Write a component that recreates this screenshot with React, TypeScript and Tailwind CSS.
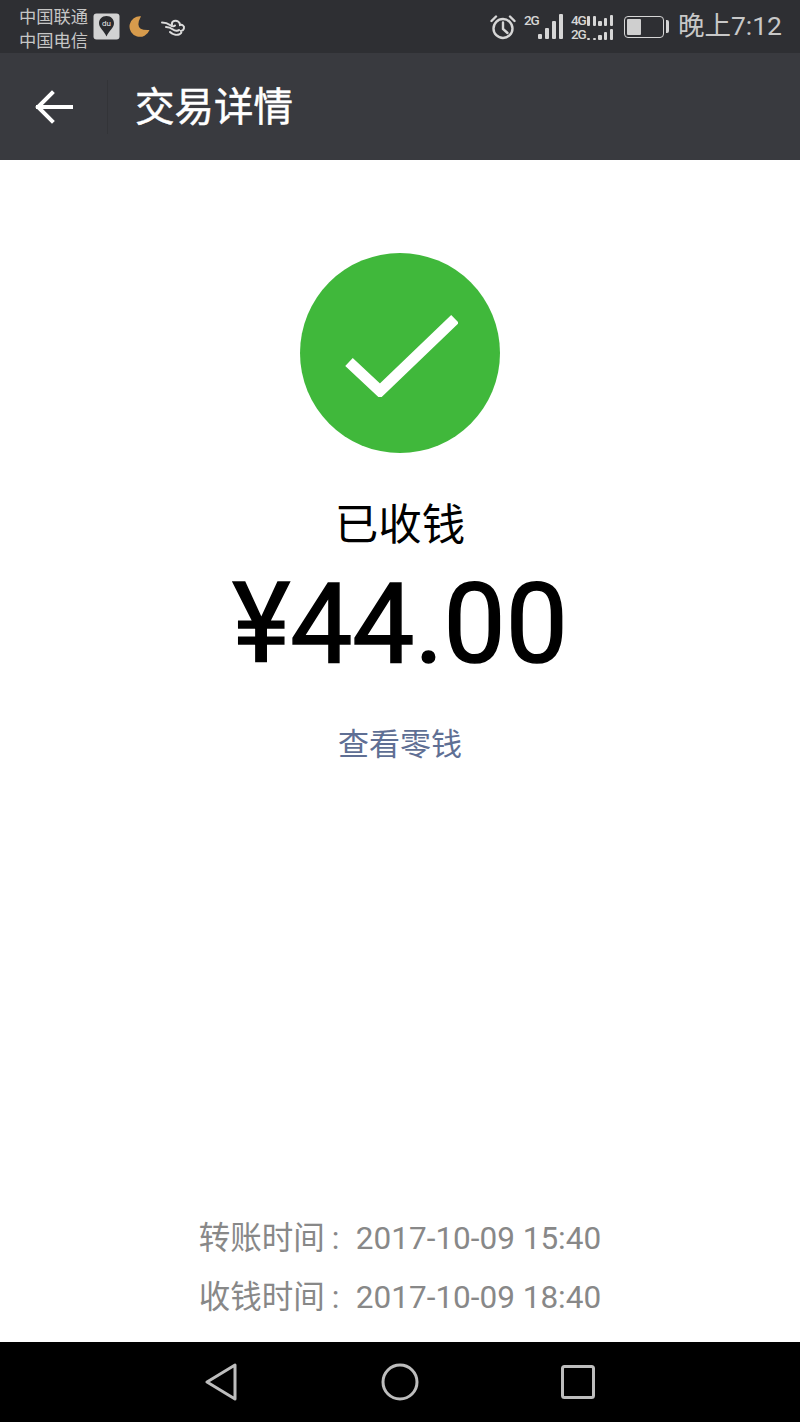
import React from 'react';

const font = "font-['Roboto','Noto_Sans_CJK_SC',sans-serif]";

const BaiduIcon = () => (
  <svg width="27" height="27" viewBox="0 0 27 27">
    <rect x="0.5" y="0.5" width="26" height="26" rx="3" fill="#d2d2d2" />
    <path d="M13.5 3C8.8 3 6 6.4 6 10.2c0 4.6 5.2 7.6 7.5 13.3C15.8 17.800 21 14.800 21 10.200 21 6.400 18.200 3 13.500 3z" fill="#2a2b2e" />
    <text x="13.5" y="13" fontSize="8" fill="#e8e8e8" textAnchor="middle" fontFamily="Roboto">du</text>
  </svg>
);

const MoonIcon = () => (
  <svg width="21" height="21" viewBox="0 0 21 21">
    <path d="M12 .3A10.300 10.300 0 1 0 20.500 14Q4 15 12 .3z" fill="#d79b4c" />
  </svg>
);

const CloudIcon = () => (
  <svg width="25" height="20" viewBox="0 0 25 20" fill="none" stroke="#dcdcdc" strokeWidth="2" strokeLinecap="round">
    <path d="M1 5.500c4 0 6 1 8 2.500 2 1.500 4 1.500 5 .5" />
    <path d="M5 10c3 0 5 1 7 2.500s5 1.500 6 .5" />
    <path d="M9 15c2 2 6 3.500 9 2.500 2-.6 3-2 2-3.500 3-.5 4-4 2-5.500-1-.8-2-.8-3-.5 0-3-3-5-6-4-1.500.5-2.500 2-2 3.500" />
  </svg>
);

const AlarmIcon = () => (
  <svg width="26" height="26" viewBox="0 0 26 26" fill="none" stroke="#d6d6d6" strokeWidth="2.4">
    <circle cx="13" cy="14.500" r="9.500" />
    <path d="M13 8.500v6.500l4.500 4" strokeLinecap="round" />
    <path d="M1.500 7 6 2.500M24.500 7 20 2.500" strokeLinecap="round" />
  </svg>
);

const SignalBars = ({ bars, className }: { bars: number[]; className: string }) => (
  <div className={`flex items-end ${className}`}>
    {bars.map((h, i) => (
      <div key={i} className="w-full rounded-[1px] bg-[#d6d6d6]" style={{ height: h }} />
    ))}
  </div>
);

const StatusBar = () => (
  <div className="flex h-[53px] items-center bg-[#2e2f33] pl-[19px] pr-[18px]">
    <div className="flex w-[74px] flex-col pt-[4px] text-[17.300px] leading-[24px] text-[#c6c6c6]">
      <span>中国联通</span>
      <span>中国电信</span>
    </div>
    <div className="flex items-center">
      <BaiduIcon />
      <div className="ml-[9px]"><MoonIcon /></div>
      <div className="ml-[11px]"><CloudIcon /></div>
    </div>
    <div className="ml-auto flex items-center">
      <AlarmIcon />
      <div className="ml-[8px] flex items-end">
        <span className="mb-[13px] w-[14px] text-[13.500px] leading-[12px] font-medium tracking-[-1px] text-[#d6d6d6]">2G</span>
        <SignalBars bars={[5, 11, 18, 25]} className="w-[25px] gap-[3.500px]" />
      </div>
      <div className="ml-[8px] flex flex-col gap-[2px] text-[13.500px] leading-[12px] font-medium tracking-[-1px] text-[#d6d6d6]">
        <div className="flex items-end gap-[2px]">
          <span className="w-[14px]">4G</span>
          <SignalBars bars={[10, 10, 5, 8, 11]} className="w-[26px] gap-[2.500px]" />
        </div>
        <div className="flex items-end gap-[2px]">
          <span className="w-[14px]">2G</span>
          <SignalBars bars={[2, 2, 5, 8, 11]} className="w-[26px] gap-[2.500px]" />
        </div>
      </div>
      <div className="ml-[11px] flex items-center">
        <div className="h-[22px] w-[40px] rounded-[4px] border-[1.500px] border-[#d6d6d6] p-[2px]">
          <div className="h-full w-[14px] rounded-[1px] bg-[#cfcfcf]" />
        </div>
        <div className="ml-[2px] h-[13px] w-[3px] rounded-r-[2px] bg-[#d6d6d6]" />
      </div>
      <span className="ml-[9px] text-[26.500px] leading-none text-[#c8c8c8]">晚上7:12</span>
    </div>
  </div>
);

const Header = () => (
  <div className="flex h-[107px] items-center bg-[#393a3f]">
    <svg className="ml-[35px]" width="38" height="34" viewBox="0 0 38 34" fill="none" stroke="#fff" strokeWidth="4" strokeLinecap="square">
      <path d="M3 17h33M17 3 3 17l14 14" />
    </svg>
    <div className="ml-[34px] h-[54px] w-px bg-[#333438]" />
    <span className="ml-[27px] pt-[3px] text-[39.500px] leading-none text-white [-webkit-text-stroke:0.5px_#fff]">交易详情</span>
  </div>
);

const NavBar = () => (
  <div className="flex h-[80px] items-center justify-center bg-black">
    <svg className="mr-[144px]" width="32" height="38" viewBox="0 0 32 38" fill="none" stroke="#bdbdbd" strokeWidth="3" strokeLinejoin="round">
      <path d="M30 2v34L2 19z" />
    </svg>
    <svg width="38" height="38" viewBox="0 0 38 38" fill="none" stroke="#bdbdbd" strokeWidth="3">
      <circle cx="19" cy="19" r="17" />
    </svg>
    <svg className="ml-[142px]" width="34" height="34" viewBox="0 0 34 34" fill="none" stroke="#bdbdbd" strokeWidth="3">
      <rect x="1.500" y="1.500" width="31" height="31" rx="2" />
    </svg>
  </div>
);

const TimeRow = ({ label, value }: { label: string; value: string }) => (
  <p className="flex">
    <span>{label}</span>
    <span className="w-[31px] pl-[7px]">:</span>
    <span>{value}</span>
  </p>
);

export default function App() {
  return (
    <div className={`flex h-[1422px] w-[800px] flex-col bg-white ${font}`}>
      <StatusBar />
      <Header />
      <main className="flex flex-1 flex-col items-center pt-[93px]">
        <div className="flex h-[200px] w-[200px] items-center justify-center rounded-full bg-[#40b83b]">
          <svg width="116" height="88" viewBox="0 0 116 88" fill="none" stroke="#fff" strokeWidth="11">
            <path d="M7 53l31 29 75-72" />
          </svg>
        </div>
        <p className="mt-[46px] text-[43.500px] leading-[54px] text-black">已收钱</p>
        <p className="mt-[16px] text-[110.500px] leading-[110px] text-black [-webkit-text-stroke:1.500px_#000]">¥44.00</p>
        <p className="mt-[46px] text-[31px] leading-[40px] text-[#5f6f94]">查看零钱</p>
        <div className="mt-auto mb-[15px] flex flex-col items-center text-[31.500px] leading-[59px] text-[#888888]">
          <TimeRow label="转账时间" value="2017-10-09 15:40" />
          <TimeRow label="收钱时间" value="2017-10-09 18:40" />
        </div>
      </main>
      <NavBar />
    </div>
  );
}
